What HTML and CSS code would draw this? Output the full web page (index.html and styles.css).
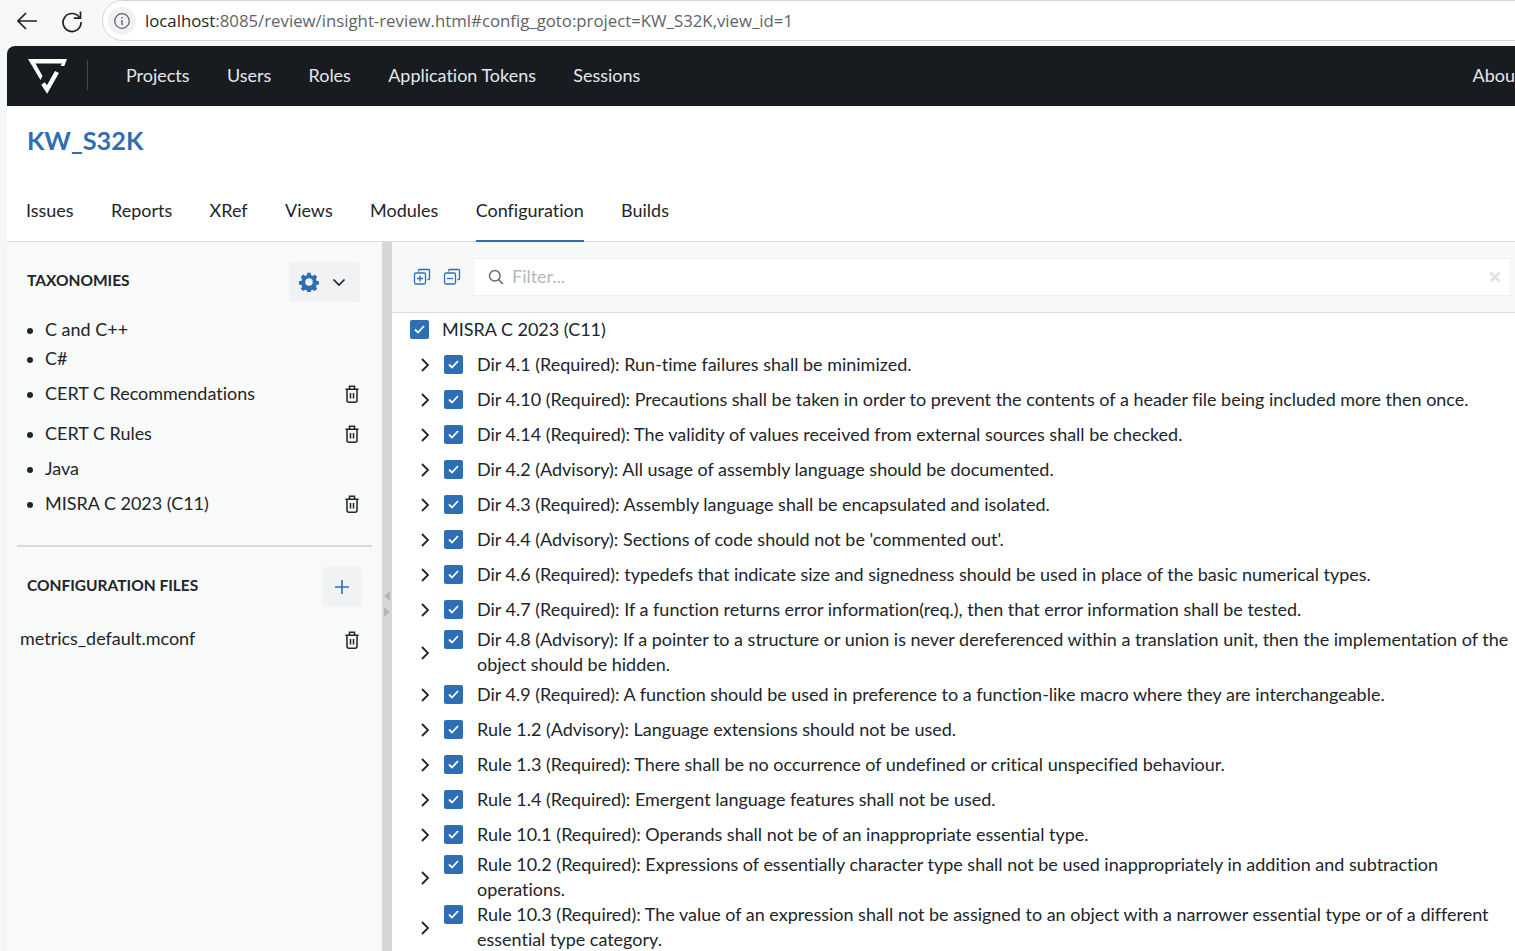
FILE: index.html
```html
<!DOCTYPE html>
<html lang="en">
<head>
<meta charset="utf-8">
<title>Insight Review</title>
<link rel="stylesheet" href="styles.css">
</head>
<body>
<header class="chrome">
  <svg class="chrome-back" width="24" height="24" viewBox="0 0 24 24"><path d="M22 12H3M11 4l-8 8 8 8" fill="none" stroke="#1f1f1f" stroke-width="1.7"/></svg>
  <svg class="chrome-reload" width="24" height="24" viewBox="0 0 24 24"><path d="M19.500 8.500A9 9 0 1 0 21 13" fill="none" stroke="#1f1f1f" stroke-width="1.7"/><path d="M20.500 2.500v6.600h-6.600" fill="none" stroke="#1f1f1f" stroke-width="1.7"/></svg>
  <div class="address">
    <span class="site-info"><svg width="18" height="18" viewBox="0 0 18 18"><circle cx="9" cy="9" r="7.3" fill="none" stroke="#5f6368" stroke-width="1.3"/><path d="M9 8v5M9 5v1.500" stroke="#5f6368" stroke-width="1.4"/></svg></span>
    <span class="url"><span class="url-host">localhost</span>:8085/review/insight-review.html#config_goto:project=KW_S32K,view_id=1</span>
  </div>
</header>
<div class="app">
  <nav class="topnav">
    <svg class="logo" width="40" height="36" viewBox="0 0 40 36"><path d="M1 1H40L37.300 8H33.500L35 5.500H8.500L15.500 18 13.500 22z" fill="#fff"/><path d="M16 25.500L20 31.500 30 14" fill="none" stroke="#fff" stroke-width="4.500"/></svg>
    <span class="nav-sep"></span>
    <a class="nav-link">Projects</a>
    <a class="nav-link">Users</a>
    <a class="nav-link">Roles</a>
    <a class="nav-link">Application Tokens</a>
    <a class="nav-link">Sessions</a>
    <a class="nav-link nav-about">About</a>
  </nav>
  <section class="project-head">
    <h1 class="project-title">KW_S32K</h1>
    <div class="tabs">
      <a class="tab">Issues</a>
      <a class="tab">Reports</a>
      <a class="tab">XRef</a>
      <a class="tab">Views</a>
      <a class="tab">Modules</a>
      <a class="tab tab-active">Configuration</a>
      <a class="tab">Builds</a>
    </div>
  </section>
  <main class="workspace">
    <aside class="sidebar">
      <div class="side-head">
        <h2 class="side-title">TAXONOMIES</h2>
        <button class="tool-btn tool-btn-wide">
          <svg width="20" height="20" viewBox="0 0 24 24"><path fill="#2f6db5" fill-rule="evenodd" d="M10 1h4l.6 3 1.900.8 2.500-1.700 2.900 2.900-1.700 2.500.8 1.900 3 .6v4l-3 .6-.8 1.900 1.700 2.500-2.900 2.900-2.500-1.700-1.900.8-.6 3h-4l-.6-3-1.900-.8-2.500 1.700-2.900-2.900 1.700-2.500-.8-1.900-3-.6v-4l3-.6.8-1.900L2.100 6l2.900-2.900 2.500 1.700 1.900-.8zM12 7.500a4.500 4.500 0 1 0 0 9 4.500 4.500 0 0 0 0-9z"/></svg>
          <svg width="14" height="14" viewBox="0 0 14 14"><path d="M1.500 4.500L7 10l5.500-5.500" fill="none" stroke="#212529" stroke-width="1.700"/></svg>
        </button>
      </div>
      <ul class="tax-list">
        <li class="tax-item"><span class="tax-name">C and C++</span></li>
        <li class="tax-item"><span class="tax-name">C#</span></li>
        <li class="tax-item tax-tall"><span class="tax-name">CERT C Recommendations</span><svg class="trash" width="16" height="18" viewBox="0 0 16 18"><path d="M1.500 4.200h13M5.500 4V1.200h5V4M3 4.200v11q0 2 2 2h6q2 0 2-2v-11M6.500 8v5.500M9.500 8v5.500" fill="none" stroke="#212529" stroke-width="1.500"/></svg></li>
        <li class="tax-item tax-tall"><span class="tax-name">CERT C Rules</span><svg class="trash" width="16" height="18" viewBox="0 0 16 18"><path d="M1.500 4.200h13M5.500 4V1.200h5V4M3 4.200v11q0 2 2 2h6q2 0 2-2v-11M6.500 8v5.500M9.500 8v5.500" fill="none" stroke="#212529" stroke-width="1.500"/></svg></li>
        <li class="tax-item"><span class="tax-name">Java</span></li>
        <li class="tax-item tax-tall"><span class="tax-name">MISRA C 2023 (C11)</span><svg class="trash" width="16" height="18" viewBox="0 0 16 18"><path d="M1.500 4.200h13M5.500 4V1.200h5V4M3 4.200v11q0 2 2 2h6q2 0 2-2v-11M6.500 8v5.500M9.500 8v5.500" fill="none" stroke="#212529" stroke-width="1.500"/></svg></li>
      </ul>
      <hr class="side-rule">
      <div class="side-head side-head-files">
        <h2 class="side-title">CONFIGURATION FILES</h2>
        <button class="tool-btn"><svg width="16" height="16" viewBox="0 0 16 16"><path d="M8 1v14M1 8h14" stroke="#2f6db5" stroke-width="1.600"/></svg></button>
      </div>
      <div class="file-row"><span class="file-name">metrics_default.mconf</span><svg class="trash" width="16" height="18" viewBox="0 0 16 18"><path d="M1.500 4.200h13M5.500 4V1.200h5V4M3 4.200v11q0 2 2 2h6q2 0 2-2v-11M6.500 8v5.500M9.500 8v5.500" fill="none" stroke="#212529" stroke-width="1.500"/></svg></div>
    </aside>
    <div class="splitter">
      <span class="split-left"></span>
      <span class="split-right"></span>
    </div>
    <section class="content">
      <div class="filter-bar">
        <svg class="fold-icon" width="18" height="18" viewBox="0 0 18 18"><path d="M5.500 3.500V2.500q0-1 1-1h9q1 0 1 1v8q0 1-1 1h-1" fill="none" stroke="#2f6db5" stroke-width="1.300"/><rect x="1.500" y="5" width="11" height="11" rx="1.500" fill="none" stroke="#2f6db5" stroke-width="1.300"/><path d="M4 10.500h6M7 7.500v6" stroke="#2f6db5" stroke-width="1.300"/></svg>
        <svg class="fold-icon" width="18" height="18" viewBox="0 0 18 18"><path d="M5.500 3.500V2.500q0-1 1-1h9q1 0 1 1v8q0 1-1 1h-1" fill="none" stroke="#2f6db5" stroke-width="1.300"/><rect x="1.500" y="5" width="11" height="11" rx="1.500" fill="none" stroke="#2f6db5" stroke-width="1.300"/><path d="M4 10.500h6" stroke="#2f6db5" stroke-width="1.300"/></svg>
        <div class="filter-box">
          <svg width="16" height="16" viewBox="0 0 16 16"><circle cx="6.800" cy="6.800" r="5.300" fill="none" stroke="#5f6b76" stroke-width="1.500"/><path d="M10.700 10.700L15 15" stroke="#5f6b76" stroke-width="1.500"/></svg>
          <span class="filter-placeholder">Filter...</span>
          <svg class="filter-clear" width="12" height="12" viewBox="0 0 12 12"><path d="M1.500 1.500l9 9M10.500 1.500l-9 9" stroke="#dfe1e3" stroke-width="2.600"/></svg>
        </div>
      </div>
      <div class="tree">
        <div class="tree-root"><span class="check"><svg width="11" height="9" viewBox="0 0 11 9"><path d="M1 4.500l3 3 6-6.500" fill="none" stroke="#fff" stroke-width="1.800"/></svg></span><span>MISRA C 2023 (C11)</span></div>
        <div class="rule"><svg class="chev" width="10" height="14" viewBox="0 0 10 14"><path d="M2 1l6 6-6 6" fill="none" stroke="#212529" stroke-width="1.800"/></svg><span class="check"><svg width="11" height="9" viewBox="0 0 11 9"><path d="M1 4.500l3 3 6-6.500" fill="none" stroke="#fff" stroke-width="1.800"/></svg></span><span class="rule-text">Dir 4.1 (Required): Run-time failures shall be minimized.</span></div>
        <div class="rule"><svg class="chev" width="10" height="14" viewBox="0 0 10 14"><path d="M2 1l6 6-6 6" fill="none" stroke="#212529" stroke-width="1.800"/></svg><span class="check"><svg width="11" height="9" viewBox="0 0 11 9"><path d="M1 4.500l3 3 6-6.500" fill="none" stroke="#fff" stroke-width="1.800"/></svg></span><span class="rule-text">Dir 4.10 (Required): Precautions shall be taken in order to prevent the contents of a header file being included more then once.</span></div>
        <div class="rule"><svg class="chev" width="10" height="14" viewBox="0 0 10 14"><path d="M2 1l6 6-6 6" fill="none" stroke="#212529" stroke-width="1.800"/></svg><span class="check"><svg width="11" height="9" viewBox="0 0 11 9"><path d="M1 4.500l3 3 6-6.500" fill="none" stroke="#fff" stroke-width="1.800"/></svg></span><span class="rule-text">Dir 4.14 (Required): The validity of values received from external sources shall be checked.</span></div>
        <div class="rule"><svg class="chev" width="10" height="14" viewBox="0 0 10 14"><path d="M2 1l6 6-6 6" fill="none" stroke="#212529" stroke-width="1.800"/></svg><span class="check"><svg width="11" height="9" viewBox="0 0 11 9"><path d="M1 4.500l3 3 6-6.500" fill="none" stroke="#fff" stroke-width="1.800"/></svg></span><span class="rule-text">Dir 4.2 (Advisory): All usage of assembly language should be documented.</span></div>
        <div class="rule"><svg class="chev" width="10" height="14" viewBox="0 0 10 14"><path d="M2 1l6 6-6 6" fill="none" stroke="#212529" stroke-width="1.800"/></svg><span class="check"><svg width="11" height="9" viewBox="0 0 11 9"><path d="M1 4.500l3 3 6-6.500" fill="none" stroke="#fff" stroke-width="1.800"/></svg></span><span class="rule-text">Dir 4.3 (Required): Assembly language shall be encapsulated and isolated.</span></div>
        <div class="rule"><svg class="chev" width="10" height="14" viewBox="0 0 10 14"><path d="M2 1l6 6-6 6" fill="none" stroke="#212529" stroke-width="1.800"/></svg><span class="check"><svg width="11" height="9" viewBox="0 0 11 9"><path d="M1 4.500l3 3 6-6.500" fill="none" stroke="#fff" stroke-width="1.800"/></svg></span><span class="rule-text">Dir 4.4 (Advisory): Sections of code should not be 'commented out'.</span></div>
        <div class="rule"><svg class="chev" width="10" height="14" viewBox="0 0 10 14"><path d="M2 1l6 6-6 6" fill="none" stroke="#212529" stroke-width="1.800"/></svg><span class="check"><svg width="11" height="9" viewBox="0 0 11 9"><path d="M1 4.500l3 3 6-6.500" fill="none" stroke="#fff" stroke-width="1.800"/></svg></span><span class="rule-text">Dir 4.6 (Required): typedefs that indicate size and signedness should be used in place of the basic numerical types.</span></div>
        <div class="rule"><svg class="chev" width="10" height="14" viewBox="0 0 10 14"><path d="M2 1l6 6-6 6" fill="none" stroke="#212529" stroke-width="1.800"/></svg><span class="check"><svg width="11" height="9" viewBox="0 0 11 9"><path d="M1 4.500l3 3 6-6.500" fill="none" stroke="#fff" stroke-width="1.800"/></svg></span><span class="rule-text">Dir 4.7 (Required): If a function returns error information(req.), then that error information shall be tested.</span></div>
        <div class="rule rule-wrap"><svg class="chev" width="10" height="14" viewBox="0 0 10 14"><path d="M2 1l6 6-6 6" fill="none" stroke="#212529" stroke-width="1.800"/></svg><span class="check"><svg width="11" height="9" viewBox="0 0 11 9"><path d="M1 4.500l3 3 6-6.500" fill="none" stroke="#fff" stroke-width="1.800"/></svg></span><span class="rule-text">Dir 4.8 (Advisory): If a pointer to a structure or union is never dereferenced within a translation unit, then the implementation of the object should be hidden.</span></div>
        <div class="rule"><svg class="chev" width="10" height="14" viewBox="0 0 10 14"><path d="M2 1l6 6-6 6" fill="none" stroke="#212529" stroke-width="1.800"/></svg><span class="check"><svg width="11" height="9" viewBox="0 0 11 9"><path d="M1 4.500l3 3 6-6.500" fill="none" stroke="#fff" stroke-width="1.800"/></svg></span><span class="rule-text">Dir 4.9 (Required): A function should be used in preference to a function-like macro where they are interchangeable.</span></div>
        <div class="rule"><svg class="chev" width="10" height="14" viewBox="0 0 10 14"><path d="M2 1l6 6-6 6" fill="none" stroke="#212529" stroke-width="1.800"/></svg><span class="check"><svg width="11" height="9" viewBox="0 0 11 9"><path d="M1 4.500l3 3 6-6.500" fill="none" stroke="#fff" stroke-width="1.800"/></svg></span><span class="rule-text">Rule 1.2 (Advisory): Language extensions should not be used.</span></div>
        <div class="rule"><svg class="chev" width="10" height="14" viewBox="0 0 10 14"><path d="M2 1l6 6-6 6" fill="none" stroke="#212529" stroke-width="1.800"/></svg><span class="check"><svg width="11" height="9" viewBox="0 0 11 9"><path d="M1 4.500l3 3 6-6.500" fill="none" stroke="#fff" stroke-width="1.800"/></svg></span><span class="rule-text">Rule 1.3 (Required): There shall be no occurrence of undefined or critical unspecified behaviour.</span></div>
        <div class="rule"><svg class="chev" width="10" height="14" viewBox="0 0 10 14"><path d="M2 1l6 6-6 6" fill="none" stroke="#212529" stroke-width="1.800"/></svg><span class="check"><svg width="11" height="9" viewBox="0 0 11 9"><path d="M1 4.500l3 3 6-6.500" fill="none" stroke="#fff" stroke-width="1.800"/></svg></span><span class="rule-text">Rule 1.4 (Required): Emergent language features shall not be used.</span></div>
        <div class="rule"><svg class="chev" width="10" height="14" viewBox="0 0 10 14"><path d="M2 1l6 6-6 6" fill="none" stroke="#212529" stroke-width="1.800"/></svg><span class="check"><svg width="11" height="9" viewBox="0 0 11 9"><path d="M1 4.500l3 3 6-6.500" fill="none" stroke="#fff" stroke-width="1.800"/></svg></span><span class="rule-text">Rule 10.1 (Required): Operands shall not be of an inappropriate essential type.</span></div>
        <div class="rule rule-wrap"><svg class="chev" width="10" height="14" viewBox="0 0 10 14"><path d="M2 1l6 6-6 6" fill="none" stroke="#212529" stroke-width="1.800"/></svg><span class="check"><svg width="11" height="9" viewBox="0 0 11 9"><path d="M1 4.500l3 3 6-6.500" fill="none" stroke="#fff" stroke-width="1.800"/></svg></span><span class="rule-text">Rule 10.2 (Required): Expressions of essentially character type shall not be used inappropriately in addition and subtraction operations.</span></div>
        <div class="rule rule-wrap"><svg class="chev" width="10" height="14" viewBox="0 0 10 14"><path d="M2 1l6 6-6 6" fill="none" stroke="#212529" stroke-width="1.800"/></svg><span class="check"><svg width="11" height="9" viewBox="0 0 11 9"><path d="M1 4.500l3 3 6-6.500" fill="none" stroke="#fff" stroke-width="1.800"/></svg></span><span class="rule-text">Rule 10.3 (Required): The value of an expression shall not be assigned to an object with a narrower essential type or of a different essential type category.</span></div>
      </div>
    </section>
  </main>
</div>
</body>
</html>
```
FILE: styles.css
```css
* { box-sizing: border-box; }
html, body { margin: 0; height: 100%; }
body {
  width: 1515px;
  height: 951px;
  overflow: hidden;
  background: #f5f6f7;
  font-family: Lato, "Noto Sans", sans-serif;
  font-size: 17.980px;
  font-variant-ligatures: none;
  color: #212529;
}
.chrome {
  height: 46px;
  display: flex;
  align-items: center;
  padding: 0 0 5px 15px;
  background: #f7f7f7;
}
.chrome-back, .chrome-reload { flex: none; }
.chrome-reload { margin-left: 21px; }
.address {
  margin-left: 18px;
  width: 1500px;
  height: 41px;
  flex: none;
  display: flex;
  align-items: center;
  gap: 9px;
  padding-left: 5px;
  background: #fff;
  border: 1px solid #d3d5d8;
  border-radius: 21px;
}
.site-info {
  width: 28px;
  height: 28px;
  border-radius: 50%;
  background: #f0f1f2;
  display: flex;
  align-items: center;
  justify-content: center;
}
.url {
  font-family: "Open Sans", "Noto Sans", sans-serif;
  font-size: 16.800px;
  color: #5f6368;
  white-space: nowrap;
}
.url-host { color: #1f1f1f; }
.app {
  width: 1560px;
  margin-left: 7px;
  height: 905px;
  background: #fff;
  display: flex;
  flex-direction: column;
}
.topnav {
  height: 60px;
  flex: none;
  display: flex;
  align-items: center;
  background: #181b1f;
  border-radius: 8px 0 0 0;
  padding: 0 0 2px 20px;
}
.logo { flex: none; margin-top: 2px; }
.nav-sep {
  width: 1px;
  height: 30px;
  margin: 0 38px 0 20px;
  background: #45494e;
}
.nav-link {
  color: #e4e8ec;
  margin-right: 37.300px;
  white-space: nowrap;
}
.nav-about { margin-left: 795px; }
.project-head {
  height: 136px;
  flex: none;
  border-bottom: 1px solid #dcdfe2;
  display: flex;
  flex-direction: column;
  justify-content: space-between;
}
.project-title {
  margin: 17px 0 0 20px;
  font-size: 25.300px;
  line-height: 34px;
  font-weight: 700;
  color: #2f6db5;
}
.tabs {
  display: flex;
  gap: 37.400px;
  padding-left: 19px;
}
.tab {
  height: 45px;
  line-height: 27px;
  border-bottom: 2px solid transparent;
  margin-bottom: -1px;
}
.tab-active { border-bottom-color: #2f6db5; }
.workspace {
  flex: 1;
  min-height: 0;
  display: flex;
}
.sidebar {
  width: 375px;
  flex: none;
  background: #f8f9f9;
  padding: 20px 10px 0;
}
.side-head {
  display: flex;
  align-items: center;
  justify-content: space-between;
  height: 40px;
  padding: 0 12px 0 10px;
}
.side-title {
  margin: 0 0 4px;
  font-size: 15.500px;
  font-weight: 700;
  color: #212529;
}
.side-head-files { padding-right: 10px; }
.tool-btn {
  width: 40px;
  height: 40px;
  border: 0;
  padding: 0;
  border-radius: 3px;
  background: #f0f2f4;
  display: flex;
  align-items: center;
  justify-content: center;
}
.tool-btn-wide { width: 71px; gap: 13px; padding-right: 5px; }
.tax-list {
  margin: 13px 0 0;
  padding: 0 0 0 28px;
  list-style: disc;
}
.tax-item {
  height: 30px;
  line-height: 28px;
  padding-right: 12px;
  position: relative;
}
.tax-item:first-child { height: 29px; }
.tax-tall { height: 40px; line-height: 38px; }
.tax-item::marker { font-size: 17px; }
.tax-item .trash { position: absolute; right: 12px; top: 11px; }
.side-rule {
  margin: 21px 0 0;
  border: 0;
  border-top: 2px solid #d8dadc;
}
.side-head-files { margin-top: 20px; }
.file-row {
  display: flex;
  justify-content: space-between;
  align-items: center;
  height: 35px;
  margin-top: 15px;
  padding: 0 12px 0 3px;
}
.file-name { margin-bottom: 4px; }
.splitter {
  width: 10px;
  flex: none;
  background: #d6d6d6;
  display: flex;
  flex-direction: column;
  align-items: center;
  padding-top: 349px;
  gap: 6px;
}
.split-left {
  width: 0;
  height: 0;
  border: 5px solid transparent;
  border-left: 0;
  border-right: 6px solid #b4b6b8;
}
.split-right {
  width: 0;
  height: 0;
  border: 5px solid transparent;
  border-right: 0;
  border-left: 6px solid #b4b6b8;
}
.content {
  flex: none;
  width: 1123px;
  min-width: 0;
  background: #fff;
}
.filter-bar {
  height: 71px;
  display: flex;
  align-items: center;
  gap: 12px;
  padding-left: 21px;
  background: #f7f8f8;
  border-bottom: 1px solid #d8dbde;
}
.fold-icon { flex: none; }
.filter-box {
  width: 1038px;
  height: 38px;
  display: flex;
  align-items: center;
  gap: 8px;
  padding: 0 9px 0 14px;
  background: #fff;
  border: 1px solid #eef0f1;
}
.filter-placeholder { color: #b4b8bc; margin-bottom: 3px; }
.filter-clear { margin-left: auto; }
.tree { padding-left: 18px; }
.tree-root {
  height: 34px;
  padding-bottom: 1px;
  display: flex;
  align-items: center;
  gap: 13px;
  line-height: 25px;
}
.rule {
  min-height: 35px;
  display: flex;
  align-items: center;
  line-height: 25px;
}
.chev { flex: none; margin-left: 10px; margin-right: 14px; }
.rule-wrap .chev { margin-top: 2px; }
.check {
  flex: none;
  width: 19px;
  height: 19px;
  border-radius: 2px;
  background: #2f6db5;
  display: flex;
  align-items: center;
  justify-content: center;
  align-self: flex-start;
  margin-top: 8px;
}
.rule-wrap .check { margin-top: 3px; }
.tree-root .check { align-self: center; margin-top: 0; }
.rule-text { margin-left: 14px; }
```
